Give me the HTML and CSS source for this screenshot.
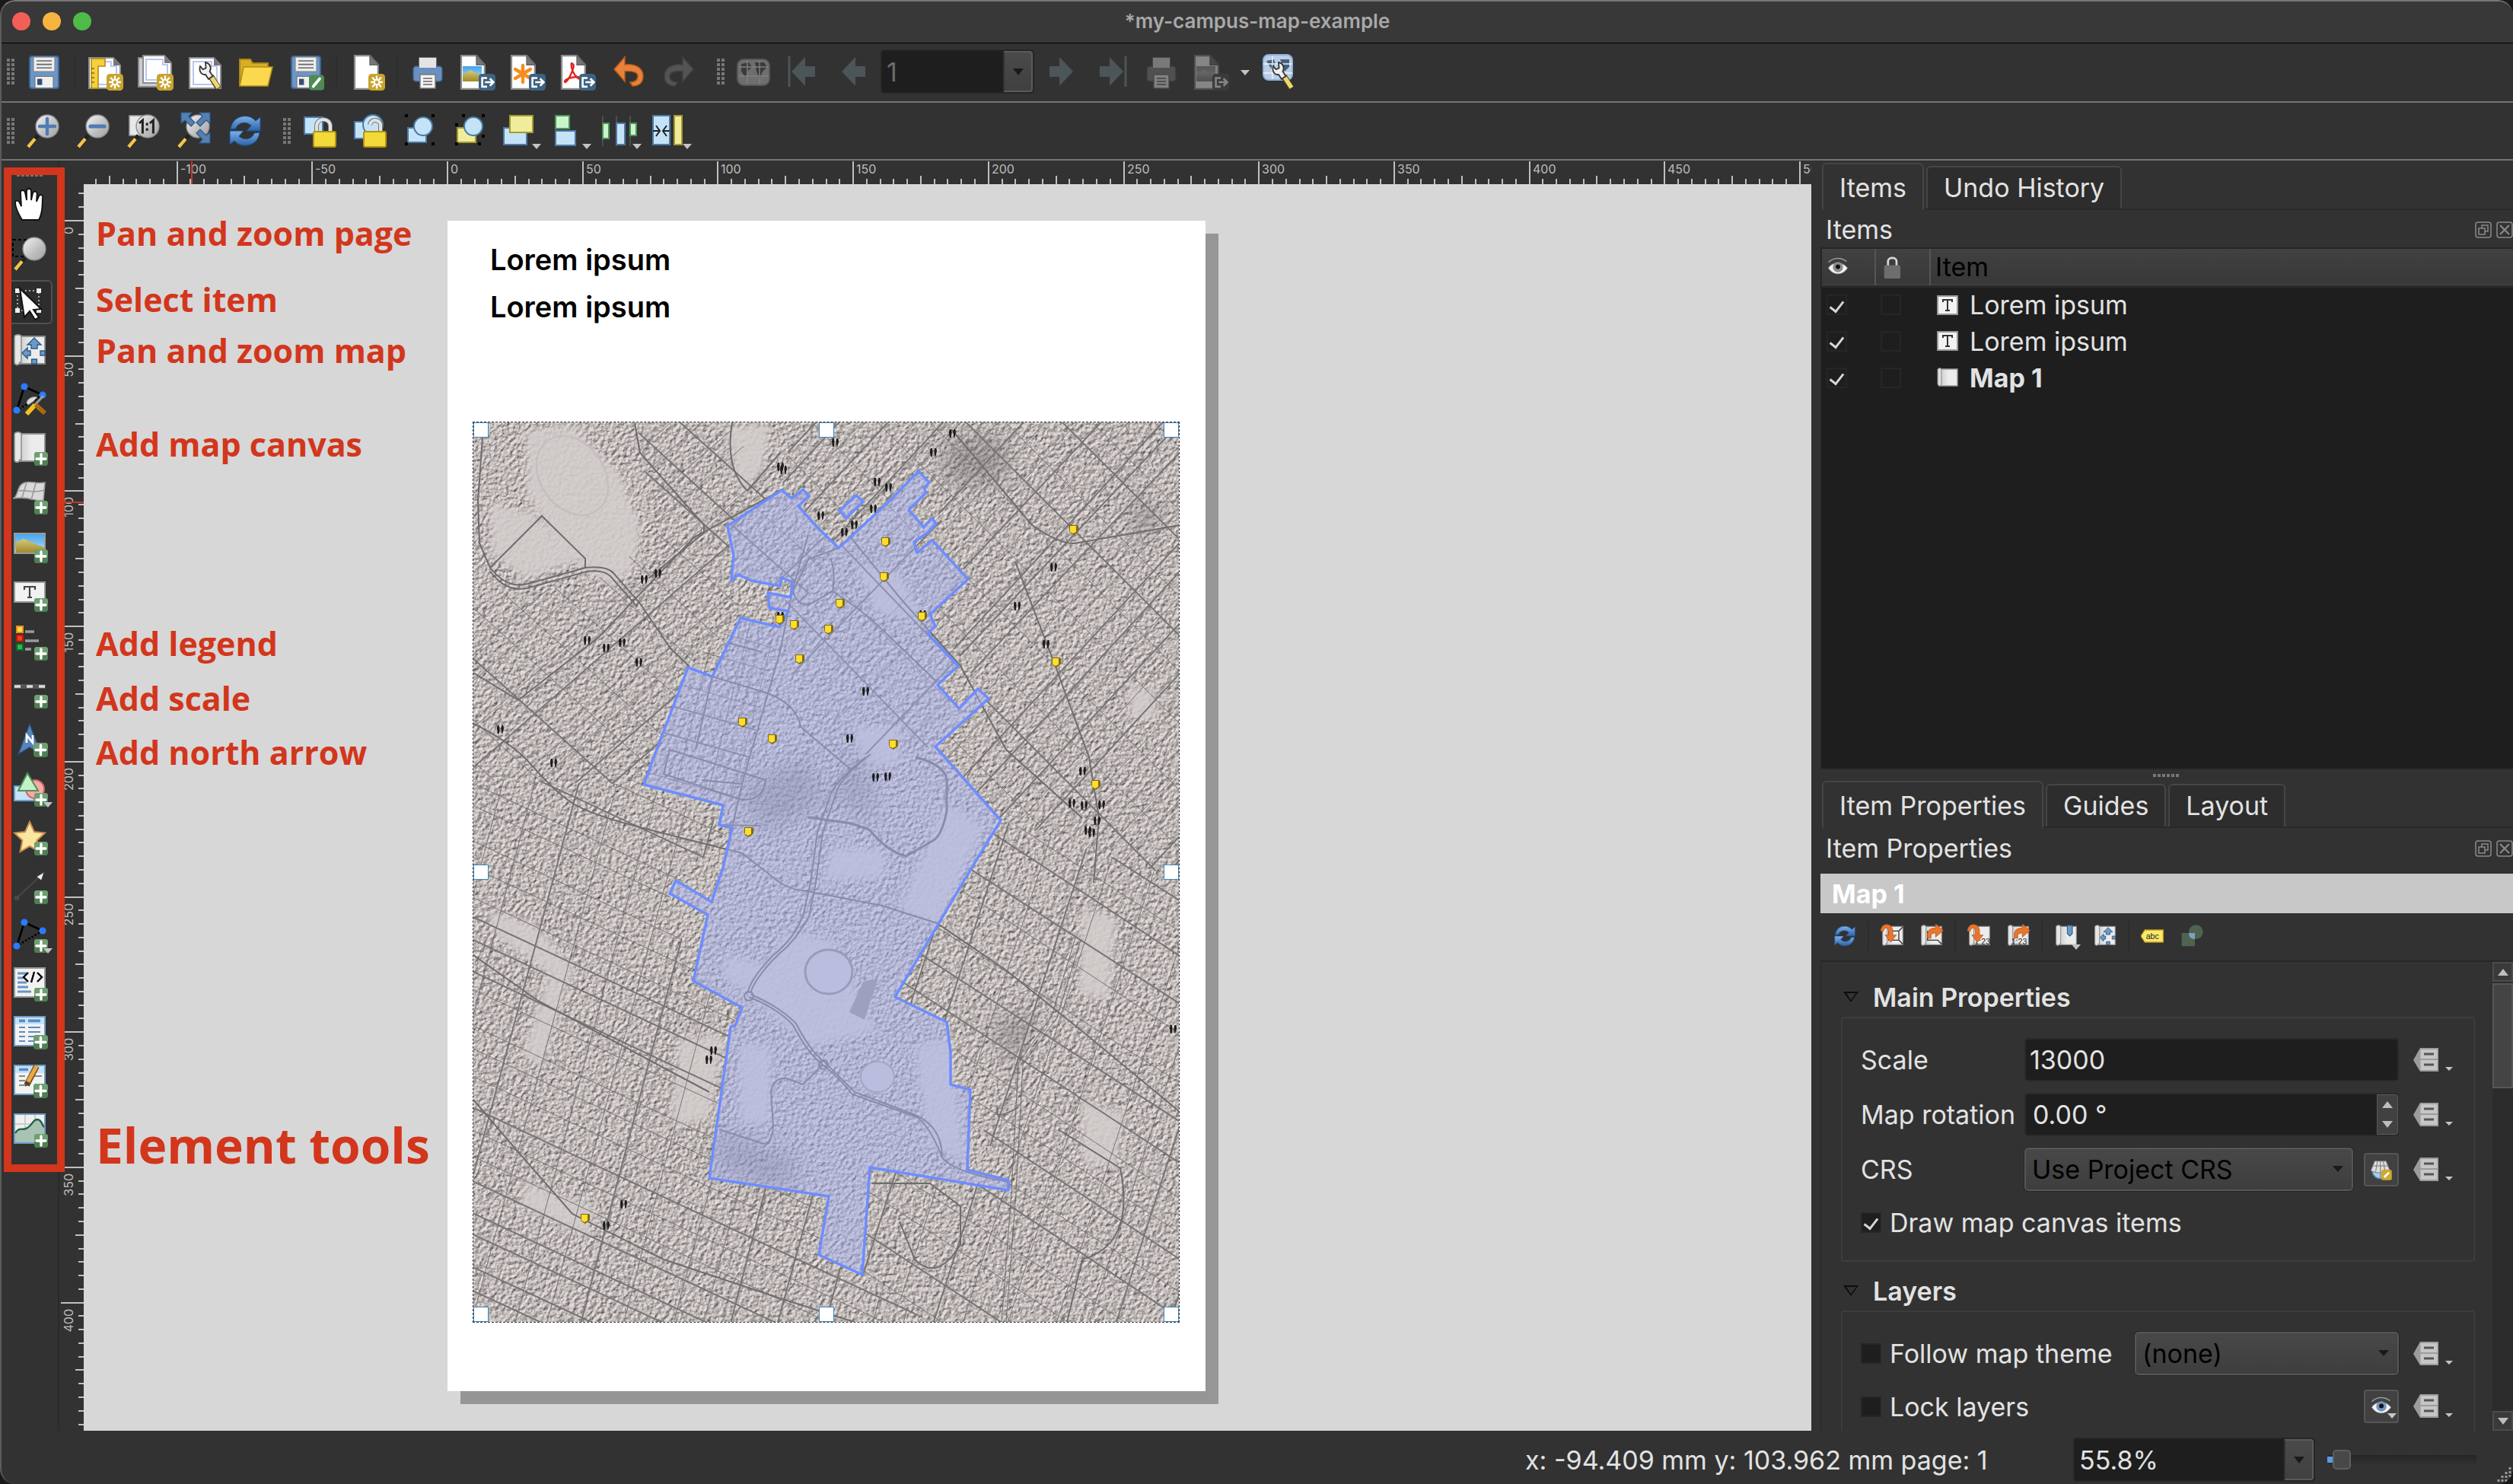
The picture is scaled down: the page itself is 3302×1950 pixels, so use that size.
FILE: index.html
```html
<!DOCTYPE html>
<html lang="en">
<head>
<meta charset="utf-8">
<title>*my-campus-map-example</title>
<link rel="stylesheet" href="styles.css">
</head>
<body>
<svg class="sprite" aria-hidden="true">
  <defs>
    <linearGradient id="gLens" x1="0" y1="0" x2="1" y2="1"><stop offset="0" stop-color="#f4f4f4"/><stop offset=".6" stop-color="#bdbdbd"/><stop offset="1" stop-color="#a2a2a2"/></linearGradient>
    <linearGradient id="gBlue" x1="0" y1="0" x2="0" y2="1"><stop offset="0" stop-color="#7fb0e6"/><stop offset="1" stop-color="#2a62ac"/></linearGradient>
    <linearGradient id="gSky" x1="0" y1="0" x2="0" y2="1"><stop offset="0" stop-color="#3fa4ee"/><stop offset="1" stop-color="#bfe0f4"/></linearGradient>
    <linearGradient id="gSand" x1="0" y1="0" x2="0" y2="1"><stop offset="0" stop-color="#d8c878"/><stop offset="1" stop-color="#a08a2c"/></linearGradient>
    <linearGradient id="gRoll" x1="0" y1="0" x2="1" y2="0"><stop offset="0" stop-color="#c8c8c8"/><stop offset=".5" stop-color="#ececec"/></linearGradient>
  </defs>
  <symbol id="b-star" viewBox="0 0 12 12"><rect width="12" height="12" rx="2.4" fill="#c8a42c"/><path d="M6 1.4v9.2M1.7 6h8.6M2.8 2.6l6.4 6.8M9.2 2.6L2.8 9.4" stroke="#fff" stroke-width="1.3"/><circle cx="6" cy="6" r="1.7" fill="#c8a42c" stroke="#fff"/></symbol>
  <symbol id="b-plus" viewBox="0 0 12 12"><rect width="12" height="12" rx="2.4" fill="#4f7f53"/><path d="M0 2.4Q0 0 2.4 0h7.2Q12 0 12 2.4V5L0 7z" fill="#6f9f72"/><path d="M6 2v8M2 6h8" stroke="#fff" stroke-width="2.2" stroke-linecap="round"/></symbol>
  <symbol id="b-out" viewBox="0 0 12 12"><rect width="12" height="12" rx="2.4" fill="#3d6382"/><path d="M6 3H2.5v6.2H6M4.5 6h5.8M8 3.4L10.6 6 8 8.6" fill="none" stroke="#fff" stroke-width="1.4"/></symbol>
  <symbol id="b-pen" viewBox="0 0 12 12"><rect width="12" height="12" rx="2.4" fill="#4f8a54"/><path d="M3.4 9L8.4 3" stroke="#fff" stroke-width="2.2" stroke-linecap="round"/></symbol>
  <symbol id="page" viewBox="0 0 24 24"><path d="M4 1.6h10l5.400 6V23.400H4z" fill="#fff" stroke="#8b8b8b" stroke-width="1.100"/><path d="M14 1.600v6h5.400z" fill="#777" stroke="#666" stroke-width=".7"/></symbol>
  <symbol id="frame" viewBox="0 0 24 24"><path d="M1.500 3h16l4.500 5v15H1.500z" fill="#fff" stroke="#8b8b8b"/><path d="M4 5.500h12v3h3.500V20.500H4z" fill="none" stroke="#b9c8ee"/><path d="M17.500 3v5H22z" fill="#777"/></symbol>
  <symbol id="save" viewBox="0 0 24 24"><rect x="2.500" y="2" width="19" height="21" rx="1.500" fill="#6c96c8" stroke="#3e6696"/><rect x="5" y="2.500" width="14" height="9.500" fill="#ededed" stroke="#888" stroke-width=".6"/><path d="M7 5h10M7 7.300h10M7 9.600h10" stroke="#666" stroke-width=".8"/><rect x="6" y="15.200" width="12" height="7.600" fill="#f0f0f0" stroke="#777" stroke-width=".6"/><rect x="7.500" y="16.800" width="3.200" height="4" fill="#344f78"/></symbol>
  <symbol id="wrench" viewBox="0 0 24 24"><path d="M15.500 15l5 8" stroke="#4c4420" stroke-width="4"/><path d="M15.500 15l5 7.600" stroke="#f0d774" stroke-width="2.800"/><path d="M8.500 8.500c-1 3 .8 6 3.500 5.500l2 3 2.800-2-2-3c1.500-2.500 0-5.500-2.800-6l.3 3.700-2 .9z" fill="#eee" stroke="#333" stroke-width=".9"/></symbol>
  <symbol id="folder" viewBox="0 0 24 24"><path d="M1.500 21V4h7l1.500 2.500h10V10" fill="#d9ae24" stroke="#a98718"/><path d="M1.500 21.500L4 9h19l-3 12.500z" fill="#fbd84e" stroke="#b08f1c" stroke-width=".8"/></symbol>
  <symbol id="printer" viewBox="0 0 24 24"><rect x="6.500" y="3" width="11" height="8" fill="#e9e9e9" stroke="#888" stroke-width=".7"/><rect x="2.500" y="8.500" width="19" height="10" rx="2" fill="#6a8fc0" stroke="#3b5f8c" stroke-width=".7"/><path d="M6.500 3h11v6.500h-11z" fill="#e4e4e4"/><rect x="7" y="14" width="10" height="9" fill="#f4f4f4" stroke="#777" stroke-width=".7"/><path d="M9 16.500h6M9 18.500h6M9 20.500h6" stroke="#666" stroke-width=".8"/></symbol>
  <symbol id="undo" viewBox="0 0 24 24"><path d="M2.500 10.500L9.500 2.500v5c8-1 12 3 12 7.500 0 4-2.500 6.500-7 6.500l-1.500-2.500c4 0 5-1.800 5-4 0-2-2-3.600-8.500-3.200V18.500z" fill="#e8823a" stroke="#b85a18" stroke-width=".8"/></symbol>
  <symbol id="globe" viewBox="0 0 24 24"><rect x="1.500" y="4" width="21" height="17" rx="4" fill="#b9cfe8" stroke="#7f9cc0"/><path d="M4 7l5-1 2 3-3 3-1 4-3-4zM13 6l6 0 2 3-3 3-2 5-2-5z" fill="#48607e"/><path d="M8 4.500v16M16 4.500v16M2 9h20M2 15h20" stroke="#eef4fa" stroke-width=".7"/></symbol>
  <symbol id="arrow-left" viewBox="0 0 24 24"><path d="M4 12L13 2.500v6h6.500v7H13v6z" fill="#4c5558"/></symbol>
  <symbol id="lens" viewBox="0 0 24 24"><path d="M2 22l6-7" stroke="#222" stroke-width="2.800"/><path d="M1.500 22.500l4.500-5.300" stroke="#f4c34c" stroke-width="2.200"/><circle cx="14" cy="9" r="7.500" fill="url(#gLens)" stroke="#8d8d8d" stroke-width=".7"/></symbol>
  <symbol id="refresh" viewBox="0 0 24 24"><path d="M2.500 11C3 5 8 1.500 14 2.500c2.500.5 4 2 5 3L22 3v9h-9l3-3.500C12 5 7 7 6 10.500z" fill="url(#gBlue)" stroke="#1f4f8f" stroke-width=".5"/><path d="M21.500 13c-.5 6-5.500 9.500-11.500 8.500-2.500-.5-4-2-5-3L2 21v-9h9l-3 3.500C12 19 17 17 18 13.500z" fill="url(#gBlue)" stroke="#1f4f8f" stroke-width=".5"/></symbol>
  <symbol id="roll" viewBox="0 0 24 24"><path d="M4 2.500h18v18H4z" fill="url(#gRoll)" stroke="#8d8d8d" stroke-width=".9"/><path d="M2 3c0-2.200 4.500-2.200 4.500 0v16.500h-1C5 22 2 21.500 2 19.500z" fill="#e6e6e6" stroke="#909090" stroke-width=".8"/></symbol>
  <symbol id="movearrows" viewBox="0 0 24 24"><path d="M15 3.500l4.500 4.500h-2.500v2.500h-4V8h-2.500zM7 13.500l3.500-3.500v2h2v3h-2v2zM22 12h-3v3h3zM13.300 20.500v-3h3.400v3z" fill="#6b9ac6" stroke="#2f5b88" stroke-width=".7"/></symbol>
  <symbol id="shape3" viewBox="0 0 24 24"><path d="M3.500 19L8.500 3.500 20.500 9" fill="none" stroke="#000" stroke-width="1.300"/><path d="M20.500 9L3.500 19" stroke="#000" stroke-width="1.300" stroke-dasharray="1.200 1.200"/><circle cx="8.500" cy="3.500" r="2.300" fill="#2a7bff"/><circle cx="20.500" cy="9" r="2.300" fill="#2a7bff"/><circle cx="3.500" cy="19" r="2.300" fill="#2a7bff"/></symbol>
  <symbol id="picture" viewBox="0 0 24 24"><rect x="2" y="4" width="20" height="13" fill="url(#gSky)" stroke="#9a9a9a"/><path d="M2.500 10l5.500-2.500 14 6V16.500h-19z" fill="url(#gSand)"/></symbol>
  <symbol id="label" viewBox="0 0 24 24"><rect x="2" y="4" width="20" height="13" fill="#f2f2f2" stroke="#999"/><path d="M8.500 9V7h7v2M12 7v7M10.500 14h3" fill="none" stroke="#444" stroke-width="1.100"/></symbol>
  <symbol id="eye" viewBox="0 0 24 24"><path d="M2 13c4-7 15-7 20 0-5 8-15 8-20 0z" fill="#f4f4f4" stroke="#999" stroke-width=".6"/><circle cx="12" cy="12" r="5.400" fill="var(--iris)"/><circle cx="12" cy="11.500" r="2.400" fill="#111"/><path d="M2 7c6-6 14-5 19-1" fill="none" stroke="#999" stroke-width="1.300"/></symbol>
  <symbol id="lockicon" viewBox="0 0 24 24"><path d="M7 11V6c0-5 9-5 9 0v5" fill="none" stroke="#d8d8d8" stroke-width="2.200"/></symbol>
  <symbol id="define" viewBox="0 0 36 34"><path d="M9 1h24v31H9L0 17z" fill="#9c9c9c"/><path d="M9.500 3h22v12h-22zM9.500 17h22v13h-22z" fill="#c6c6c6"/><path d="M14 9h13M14 23h13" stroke="#555" stroke-width="3"/></symbol>
  <symbol id="float" viewBox="0 0 22 22"><rect x="1" y="1" width="20" height="20" rx="3" fill="none" stroke="#8a8a8a" stroke-width="1.500"/><path d="M5 9h8v8H5zM9 9V5h8v8h-4" fill="none" stroke="#8a8a8a" stroke-width="1.500"/></symbol>
  <symbol id="close" viewBox="0 0 22 22"><rect x="1" y="1" width="20" height="20" rx="3" fill="none" stroke="#8a8a8a" stroke-width="1.500"/><path d="M5 5l12 12M17 5L5 17" stroke="#8a8a8a" stroke-width="2.200"/></symbol>
  <symbol id="yellow-pin" viewBox="0 0 14 14"><path d="M1 1h11l1 2v6l-2 2-4 3-5-3-1-3z" fill="#7d6a14"/><path d="M2 2h8v8l-4 2-4-2z" fill="#ffdd2e"/></symbol>
  <symbol id="people" viewBox="0 0 12 14"><path d="M2 1h2l1 4-1 8H2L1 5zM8 1h2l1 4-2 8H8L7 5z" fill="#1c1c1c"/></symbol>
  <symbol id="orange-down" viewBox="0 0 24 24"><path d="M0 7C1-1.500 11.500-1.500 12 7v4h3.500L10 18l-5.500-7H8V7C7.500 3 3.500 3 3 7z" fill="#e8762c" stroke="#b8561a" stroke-width=".6"/></symbol>
  <symbol id="orange-right" viewBox="0 0 24 24"><path d="M8 14C7 7 10 4 16 4V0l7.500 6.500L16 13V9c-4 0-5 1.500-4.500 5z" fill="#e8762c" stroke="#b8561a" stroke-width=".6"/></symbol>
</svg>

<div class="window">
  <header class="titlebar">
    <div class="lights"><span class="light red"></span><span class="light amber"></span><span class="light green"></span></div>
    <h1 class="window-title">*my-campus-map-example</h1>
  </header>

  <div class="toolbar" role="toolbar" aria-label="Layout">
    <span class="grip"></span>
    <button class="tool" aria-label="Save project"><svg viewBox="0 0 24 24"><use href="#save"/></svg></button>
    <span class="sep"></span>
    <button class="tool" aria-label="New layout"><svg viewBox="0 0 24 24"><use href="#frame"/><path d="M3 3.500h9v5H7.500V23H3z" fill="#f6cf3f" stroke="#b28d16" stroke-width=".8"/><path d="M3 10h2M3 13h2M3 16h2M3 19h2" stroke="#8a6c10" stroke-width=".8"/><use href="#b-star" x="13" y="13.500" width="11" height="11"/></svg></button>
    <button class="tool" aria-label="Duplicate layout"><svg viewBox="0 0 24 24"><path d="M1 3h17v19H1z" fill="#cfcad6" stroke="#888"/><path d="M4 1.500h14l4.500 5V19.500H4z" fill="#fff" stroke="#8b8b8b"/><path d="M6 4h11v3.500h3v10H6z" fill="none" stroke="#b9c8ee"/><path d="M18 1.500v5h4.500z" fill="#777"/><use href="#b-star" x="13" y="13.500" width="11" height="11"/></svg></button>
    <button class="tool" aria-label="Layout manager"><svg viewBox="0 0 24 24"><use href="#frame"/><use href="#wrench"/></svg></button>
    <button class="tool" aria-label="Add items from template"><svg viewBox="0 0 24 24"><use href="#folder"/></svg></button>
    <button class="tool" aria-label="Save as template"><svg viewBox="0 0 24 24"><use href="#save"/><use href="#b-pen" x="14" y="14" width="10" height="10.500"/></svg></button>
    <span class="sep"></span>
    <button class="tool" aria-label="Add pages"><svg viewBox="0 0 24 24"><use href="#page"/><use href="#b-star" x="13" y="13.500" width="11" height="11"/></svg></button>
    <span class="sep"></span>
    <button class="tool" aria-label="Print"><svg viewBox="0 0 24 24"><use href="#printer"/></svg></button>
    <button class="tool" aria-label="Export as image"><svg viewBox="0 0 24 24"><use href="#page" x="-3"/><rect x="2" y="8.500" width="12.500" height="10" fill="url(#gSky)"/><path d="M2 14l5-3 7.500 4v3.500H2z" fill="url(#gSand)"/><use href="#b-out" x="12.500" y="13.500" width="11" height="11"/></svg></button>
    <button class="tool" aria-label="Export as SVG"><svg viewBox="0 0 24 24"><use href="#page" x="-3"/><path d="M8.500 8v11M3.500 10.500l10 6M13.500 10.500l-10 6" stroke="#f68d1e" stroke-width="2.200" stroke-linecap="round"/><use href="#b-out" x="12.500" y="13.500" width="11" height="11"/></svg></button>
    <button class="tool" aria-label="Export as PDF"><svg viewBox="0 0 24 24"><use href="#page" x="-3"/><path d="M8 7c2 0 0 5-1.500 8S3 20 3 18.500 8 15.500 11 15.500s4 2 2 1.500-5-4-5.500-8S8 7 8 7z" fill="none" stroke="#e0261c" stroke-width="1.200"/><use href="#b-out" x="12.500" y="13.500" width="11" height="11"/></svg></button>
    <button class="tool" aria-label="Undo"><svg viewBox="0 0 24 24"><use href="#undo"/></svg></button>
    <button class="tool" aria-label="Redo" disabled><svg class="flip gray" viewBox="0 0 24 24"><use href="#undo"/></svg></button>
    <span class="grip wide"></span>
    <button class="tool" aria-label="Preview atlas" disabled><svg class="gray" viewBox="0 0 24 24"><use href="#globe"/></svg></button>
    <button class="tool" aria-label="First feature" disabled><svg viewBox="0 0 24 24"><use href="#arrow-left"/><path d="M2.500 2v20" stroke="#4c5558" stroke-width="1.500"/></svg></button>
    <button class="tool" aria-label="Previous feature" disabled><svg viewBox="0 0 24 24"><use href="#arrow-left"/></svg></button>
    <div class="combo atlas-page"><input type="text" value="1" aria-label="Atlas page" disabled><button class="combo-btn" aria-label="Choose page" disabled></button></div>
    <button class="tool" aria-label="Next feature" disabled><svg class="flip" viewBox="0 0 24 24"><use href="#arrow-left"/></svg></button>
    <button class="tool" aria-label="Last feature" disabled><svg class="flip" viewBox="0 0 24 24"><use href="#arrow-left"/><path d="M2.500 2v20" stroke="#4c5558" stroke-width="1.500"/></svg></button>
    <button class="tool" aria-label="Print atlas" disabled><svg class="gray" viewBox="0 0 24 24"><use href="#printer"/></svg></button>
    <button class="tool" aria-label="Export atlas" disabled><svg class="gray" viewBox="0 0 24 24"><use href="#page" x="-3"/><rect x="2" y="8.500" width="12.500" height="10" fill="url(#gSky)"/><path d="M2 14l5-3 7.500 4v3.500H2z" fill="url(#gSand)"/><use href="#b-out" x="12.500" y="13.500" width="11" height="11"/></svg></button>
    <button class="drop" aria-label="Export atlas options"></button>
    <button class="tool" aria-label="Atlas settings"><svg viewBox="0 0 24 24"><rect x="2" y="1" width="19" height="16.500" rx="3.500" fill="#b9cfe8" stroke="#8fb0d8"/><path d="M4 5l5-1 1 3-3 3zM13 4l6 0 0 5-3 3z" fill="#48607e"/><path d="M8 2v15M2 7h19M2 13h19" stroke="#eef4fa" stroke-width=".7"/><use href="#wrench"/></svg></button>
  </div>

  <div class="toolbar second" role="toolbar" aria-label="Navigation and actions">
    <span class="grip"></span>
    <button class="tool" aria-label="Zoom in"><svg viewBox="0 0 24 24"><use href="#lens"/><path d="M14 4v10M9 9h10" stroke="#4e7cb4" stroke-width="2.200" stroke-linecap="round"/></svg></button>
    <button class="tool" aria-label="Zoom out"><svg viewBox="0 0 24 24"><use href="#lens"/><path d="M9.500 9h9" stroke="#4e7cb4" stroke-width="2.600" stroke-linecap="round"/></svg></button>
    <button class="tool" aria-label="Zoom to 100%"><svg viewBox="0 0 24 24"><path d="M2 2h13v13H2z" fill="#e8e8e8" stroke="#999" stroke-width=".8"/><use href="#lens"/><path d="M9 6.500L10.700 5v8M16 6.500L17.700 5v8M13.600 7.500v.1M13.600 11v.1" fill="none" stroke="#222" stroke-width="1.500" stroke-linecap="square"/></svg></button>
    <button class="tool" aria-label="Zoom full"><svg viewBox="0 0 24 24"><use href="#lens"/><path d="M3 0h7L8 2.500l4 4L9.500 9l-4-4L3 7zM22 0h-7l2 2.500-4 4L15.500 9l4-4L22 7zM22 20h-7l2-2.500-4-4 2.500-2.500 4 4L22 13z" fill="#5480b2" stroke="#2e5684" stroke-width=".6"/></svg></button>
    <button class="tool" aria-label="Refresh view"><svg viewBox="0 0 24 24"><use href="#refresh"/></svg></button>
    <span class="grip wide"></span>
    <button class="tool" aria-label="Lock selected items"><svg viewBox="0 0 24 24"><rect x="1" y="3" width="12" height="11" fill="#c5e3f8" stroke="#4b7ba6"/><path d="M9 14V9c0-6 9-6 9 0v5" fill="none" stroke="#777" stroke-width="3"/><path d="M9 14V9c0-6 9-6 9 0v5" fill="none" stroke="#e2e2e2" stroke-width="2"/><rect x="7" y="12.500" width="14.500" height="10" rx="1" fill="#f2da3a" stroke="#b39414"/></svg></button>
    <button class="tool" aria-label="Unlock all"><svg viewBox="0 0 24 24"><rect x="1" y="6" width="10" height="11" fill="#c5e3f8" stroke="#4b7ba6"/><circle cx="13" cy="8" r="6.500" fill="#c5e3f8" stroke="#4b7ba6"/><path d="M11 8c1-5 8-3 7 1v4" fill="none" stroke="#777" stroke-width="3"/><path d="M11 8c1-5 8-3 7 1v4" fill="none" stroke="#e2e2e2" stroke-width="2"/><rect x="7" y="12.500" width="14.500" height="10" rx="1" fill="#f2da3a" stroke="#b39414"/></svg></button>
    <button class="tool" aria-label="Group"><svg viewBox="0 0 24 24"><rect x="3" y="10" width="12" height="9.500" fill="#c5e3f8" stroke="#4b7ba6"/><circle cx="13" cy="9" r="6" fill="#c5e3f8" stroke="#4b7ba6"/><path d="M1 1h2v2H1zM18.500 1h2v2h-2zM1 19.500h2v2H1zM18.500 19.500h2v2h-2z"/></svg></button>
    <button class="tool" aria-label="Ungroup"><svg viewBox="0 0 24 24"><rect x="2.500" y="10" width="12" height="9.500" fill="#f0ec9c" stroke="#a59b2c"/><circle cx="13" cy="9" r="6" fill="#c5e3f8" stroke="#4b7ba6"/><path d="M5.500 1h2v2h-2zM18.500 1h2v2h-2zM1 7h2v2H1zM1 19.500h2v2H1zM16 19.500h2v2h-2zM18.500 14.500h2v2h-2z"/></svg></button>
    <button class="tool has-menu" aria-label="Raise items"><svg viewBox="0 0 24 24"><rect x="0" y="10" width="15" height="11" fill="#c5e3f8" stroke="#4b7ba6"/><rect x="4" y="2" width="15" height="11" fill="#f0ec9c" stroke="#a59b2c"/></svg></button>
    <button class="tool has-menu" aria-label="Align items"><svg viewBox="0 0 24 24"><rect x="1" y="2" width="9" height="8.500" fill="#c8f5cc" stroke="#4f9258"/><rect x="1" y="12" width="13" height="9.500" fill="#c5e3f8" stroke="#4b7ba6"/></svg></button>
    <button class="tool has-menu" aria-label="Distribute items"><svg viewBox="0 0 24 24"><path d="M-1 2v20M8 2v20M17 2v20" stroke="#555" stroke-width=".8"/><rect x="-1" y="7" width="4" height="10" fill="#c8f5cc" stroke="#4f9258"/><rect x="8" y="7" width="5.500" height="14" fill="#c5e3f8" stroke="#4b7ba6"/><rect x="17" y="7" width="4" height="8" fill="#c8f5cc" stroke="#4f9258"/></svg></button>
    <button class="tool has-menu" aria-label="Resize items"><svg viewBox="0 0 24 24"><rect x="-1" y="2" width="11" height="19" fill="#c5e3f8" stroke="#4b7ba6"/><path d="M-1 12h4M1 8.500L3.500 12 1 15.500M10 12H6M8 8.500L5.500 12 8 15.500" fill="none" stroke="#222" stroke-width="1"/><rect x="13" y="2" width="5" height="19" fill="#f0ec9c" stroke="#a59b2c"/></svg></button>
  </div>

  <div class="workspace">
    <nav class="rail" role="toolbar" aria-label="Toolbox">
      <span class="rail-grip"></span>
      <button class="tool" aria-label="Pan layout"><svg viewBox="0 0 24 24"><path d="M7 22C4 17 2.500 14 2.500 10.500 3 8.500 5 9 6 12L6.500 13 6 4c0-2 2.500-2 3 0l1 5V3c0-2 3-2 3 0v6l1-4.500c.5-1.800 3-1.500 2.800.5L16.500 10l1.500-3.500c.7-1.500 3-1 2.500 1-.5 5 .5 9-2.500 14.500z" fill="#fff" stroke="#111" stroke-width=".9"/></svg></button>
      <button class="tool" aria-label="Zoom"><svg viewBox="0 0 24 24"><path d="M1 3h12v11H1z" fill="none" stroke="#000" stroke-dasharray="2 1.500"/><use href="#lens" x="1" y="0"/></svg></button>
      <button class="tool active" aria-label="Select/Move item" aria-pressed="true"><svg viewBox="0 0 24 24"><path d="M4 4.500h14v13H4z" fill="none" stroke="#aaa" stroke-dasharray="1 1.500"/><path d="M2.500 3h3v3h-3zM16.500 3h3v3h-3zM2.500 16h3v3h-3zM16.500 16h3v3h-3z" fill="#eee"/><path d="M5.500 3l14 13.500-5 .5 3.500 5-2.500 1.500-3.500-5.500-3.500 4z" fill="#fff" stroke="#111"/></svg></button>
      <button class="tool" aria-label="Move item content"><svg viewBox="0 0 24 24"><use href="#roll"/><use href="#movearrows"/></svg></button>
      <button class="tool" aria-label="Edit nodes item"><svg viewBox="0 0 24 24"><use href="#shape3"/><path d="M10 21.500L21 9.500" stroke="#999" stroke-width="1.600"/><path d="M10 21.500l5.500-6" stroke="#f2c21c" stroke-width="3"/><path d="M16 15.500l6 5.500" stroke="#a96a12" stroke-width="3"/><path d="M10 14.500c0-3 4-5 7-4l-3 3-3 2z" fill="#ddd" stroke="#888" stroke-width=".5"/></svg></button>
      <button class="tool" aria-label="Add map"><svg viewBox="0 0 24 24"><use href="#roll"/><use href="#b-plus" x="15" y="14.500" width="9" height="9"/></svg></button>
      <button class="tool" aria-label="Add 3D map"><svg viewBox="0 0 24 24"><path d="M1 13C5 12 3 4 9 2.500c4-1 8 1 13 0L21 14c-4 2-9-3-20-1z" fill="#d9d9d9" stroke="#999" stroke-width=".8"/><path d="M5 8c5-1 9 2 16.500-.5M10 2.500L7 12.500M16 3l-3 11" fill="none" stroke="#999" stroke-width=".8"/><use href="#b-plus" x="15" y="14.500" width="9" height="9"/></svg></button>
      <button class="tool" aria-label="Add picture"><svg viewBox="0 0 24 24"><use href="#picture"/><use href="#b-plus" x="15" y="14.500" width="9" height="9"/></svg></button>
      <button class="tool" aria-label="Add label"><svg viewBox="0 0 24 24"><use href="#label"/><use href="#b-plus" x="15" y="14.500" width="9" height="9"/></svg></button>
      <button class="tool" aria-label="Add legend"><svg viewBox="0 0 24 24"><rect x="3.500" y="1" width="4" height="4" fill="#ffe14a" stroke="#f08a1c"/><rect x="3.500" y="6.800" width="4" height="4" fill="#ff3b20" stroke="#b31c0c"/><rect x="3.500" y="12.600" width="4" height="4" fill="#35b558" stroke="#0c6a28"/><path d="M9 4.500h6M9 10.500h9M9 16h4" stroke="#9a9a9a" stroke-width="1.800"/><use href="#b-plus" x="15" y="14.500" width="9" height="9"/></svg></button>
      <button class="tool" aria-label="Add scale bar"><svg viewBox="0 0 24 24"><path d="M1.500 8.500h21" stroke="#555" stroke-width="3"/><path d="M2 8.500h20" stroke="#ddd" stroke-width="1.800" stroke-dasharray="4 4"/><use href="#b-plus" x="15" y="14" width="9" height="9"/></svg></button>
      <button class="tool" aria-label="Add north arrow"><svg viewBox="0 0 24 24"><path d="M12 1l7.500 20L12 16.500 4.500 21z" fill="#5683b8" stroke="#2a4a72" stroke-width=".7"/><path d="M10 13.500v-5l4 5v-5" fill="none" stroke="#fff" stroke-width="1.300"/><use href="#b-plus" x="14.500" y="13.500" width="9.500" height="9.500"/></svg></button>
      <button class="tool has-menu" aria-label="Add shape"><svg viewBox="0 0 24 24"><rect x="2" y="10" width="13" height="9.500" fill="#c5e3f8" stroke="#6f9ec6"/><circle cx="15.500" cy="12" r="6" fill="#f7a9a9" stroke="#d06464"/><path d="M10.500 1.500l7 11.500h-13z" fill="#c2f3c6" stroke="#4f9258"/><use href="#b-plus" x="15" y="14.500" width="9" height="9"/></svg></button>
      <button class="tool" aria-label="Add marker"><svg viewBox="0 0 24 24"><path d="M12 1.500l3 6.500 7 .8-5.200 4.800L18.200 21 12 17.500 5.800 21l1.400-7.400L2 8.800 9 8z" fill="#fbe6a0" stroke="#c98d4c"/><use href="#b-plus" x="15" y="14.500" width="9" height="9"/></svg></button>
      <button class="tool" aria-label="Add arrow"><svg viewBox="0 0 24 24"><path d="M3.500 19.500L18 6" stroke="#484848" stroke-width="1"/><path d="M2 18h3v3H2z" fill="#484848"/><path d="M16.500 5.500l5-3-1.800 5.500z" fill="#eee" stroke="#444" stroke-width=".5"/><use href="#b-plus" x="15" y="14.500" width="9" height="9"/></svg></button>
      <button class="tool has-menu" aria-label="Add node item"><svg viewBox="0 0 24 24"><use href="#shape3"/><use href="#b-plus" x="15" y="14.500" width="9" height="9"/></svg></button>
      <button class="tool" aria-label="Add HTML"><svg viewBox="0 0 24 24"><rect x="2" y="1.500" width="20" height="19" fill="#f2f2f2" stroke="#999"/><path d="M4 5h6M4 8h4M4 11h6M4 14h7M4 17h9" stroke="#6a94c8" stroke-width="1.500"/><path d="M11 4.500L8 7.500l3 3M17 4.500l3 3-3 3M15 4l-2 7" fill="none" stroke="#000" stroke-width="1.200"/><use href="#b-plus" x="15" y="14.500" width="9" height="9"/></svg></button>
      <button class="tool" aria-label="Add attribute table"><svg viewBox="0 0 24 24"><rect x="2" y="1.500" width="20" height="19" fill="#f2f2f2" stroke="#6f9ec6"/><path d="M2.500 2h19v4.500h-19z" fill="#c5e3f8"/><path d="M5 4.200h4M11 4.200h8" stroke="#5c8cc4" stroke-width="1.800"/><path d="M5 8.500h4M11 8.500h8M5 11.500h4M11 11.500h8M5 14.500h4M11 14.500h8M5 17.500h4M11 17.500h5" stroke="#5c8cc4"/><use href="#b-plus" x="14.500" y="13.500" width="9.500" height="9.500"/></svg></button>
      <button class="tool" aria-label="Add fixed table"><svg viewBox="0 0 24 24"><rect x="2" y="1.500" width="20" height="19" fill="#f2f2f2" stroke="#6f9ec6"/><path d="M2.500 2h19v4.500h-19z" fill="#c5e3f8"/><path d="M5 4.200h6" stroke="#5c8cc4" stroke-width="1.800"/><path d="M5 8.500h4M5 11.500h4M5 14.500h4M15 8.500h5" stroke="#888"/><path d="M10 14.500L16.500 2" stroke="#7a4a12" stroke-width="4"/><path d="M10.500 13L16.500 2" stroke="#eaa84a" stroke-width="2.600"/><path d="M9 15.500l.5-4 3 1.800z" fill="#444"/><use href="#b-plus" x="14.500" y="13.500" width="9.500" height="9.500"/></svg></button>
      <button class="tool" aria-label="Add elevation profile"><svg viewBox="0 0 24 24"><rect x="2" y="1.500" width="20" height="19" fill="#eef0f0" stroke="#6f9ec6"/><path d="M9 2v18M15.500 2v18M2.500 8h19M2.500 14h19" stroke="#ccc"/><path d="M2.500 14c3-5 5-1 8-3.500C14 8.500 14 5 17 5c3 0 3 4 4.500 5v10h-19z" fill="#a8c2b4"/><path d="M2.500 14c3-5 5-1 8-3.500C14 8.500 14 5 17 5c3 0 3 4 4.500 5" fill="none" stroke="#22614a" stroke-width="1.200"/><use href="#b-plus" x="15" y="14.500" width="9" height="9"/></svg></button>
      <span class="rail-outline"></span>
    </nav>

    <main class="view">
      <span class="ruler-corner"></span>
      <svg class="ruler-x" id="ruler-x"></svg>
      <svg class="ruler-y" id="ruler-y"></svg>
      <div class="canvas">
        <section class="sheet">
          <p class="sheet-label l1">Lorem ipsum</p>
          <p class="sheet-label l2">Lorem ipsum</p>
          <div class="map">
            <svg id="map" viewBox="0 0 927 1182" role="img" aria-label="Campus map">
              <defs>
                <filter id="relief" x="0" y="0" width="100%" height="100%" color-interpolation-filters="sRGB">
                  <feTurbulence type="fractalNoise" baseFrequency="0.2" numOctaves="3" seed="7"/>
                  <feColorMatrix values="0 0 0 0 0  0 0 0 0 0  0 0 0 0 0  1 0 0 0 0"/>
                  <feDiffuseLighting surfaceScale="1.9" diffuseConstant="1.09" lighting-color="#d9d2d0"><feDistantLight azimuth="225" elevation="56"/></feDiffuseLighting>
                </filter>
                <filter id="soft"><feGaussianBlur stdDeviation="5"/></filter>
                <filter id="shade"><feGaussianBlur stdDeviation="14"/></filter>
              </defs>
              <rect width="927" height="1182" fill="#cdc8c6"/>
              <rect width="927" height="1182" filter="url(#relief)"/>
              <g id="blocks" fill="none"></g>
              <g fill="#d3cdcc" filter="url(#soft)" opacity=".88">
                <path d="M70 10l60-5 60 60 30 70-10 60-30 20-60-40-50-80z"/><path d="M20 105l60 15 50 65-60 20-45-30zM330 5l60 0-10 60-30 30zM20 640l60 20 55 60-30 10-80-60zM100 720l30 0-40 130-25-20z"/>
                <path d="M500 400h60v50h-50zM620 500l50 30-60 130-50-20zM470 560h70v40h-80zM410 670l60 10 60 120-90 20-80-70z"/>
                <path d="M800 640l45 10-10 110-40-10zM800 890l55 20-10 70-45-10zM860 350h35v40h-30zM270 810l60-5-20 110-50 10z"/>
                <path d="M580 820l45-10 20 160-45-20zM330 700l50 10 10 60-60-40zM350 820h40v100h-40zM70 1000l90 30-10 40-90-40zM500 180l60 20 30 60-60-10z"/>
              </g>
              <g fill="#6e6a6c" filter="url(#shade)" opacity=".42">
                <path d="M620 20h80v60h-80zM350 480l90-40 20 60-80 40zM680 790l60-20-30 80zM320 930l110 40-20 40-90-30zM470 490l40-60 20 100zM860 100l40 10-20 60z"/>
              </g>
              <ellipse cx="467" cy="722" rx="31" ry="29" fill="#cfc9ca" stroke="#8e898d" stroke-width="3"/>
              <path d="M512 735l20-5-18 55-20-10z" fill="#979294"/><ellipse cx="531" cy="860" rx="22" ry="20" fill="#cfc9ca" stroke="#a39ea0" stroke-width="2"/>
              <ellipse cx="130" cy="70" rx="42" ry="56" transform="rotate(-35 130 70)" fill="none" stroke="#c3bdbc" stroke-width="2"/>
              <g id="streets" fill="none" stroke="#777574"></g>
              <g fill="none" stroke="#6f6d6c" stroke-width="2">
                <path d="M12 20L6 104 8 159 22 191Q45 220 72 212L147 191Q175 188 184 198L219 238 259 297 284 321"/>
                <path d="M22 196Q45 226 74 217L149 196Q170 193 180 202L215 242"/>
                <path d="M212 1L219 40 303 135 303 145 230 205M59 365L165 282 290 151 403 90M0 329L59 365M22 191L90 123 147 179 147 191"/>
                <path d="M0 396Q50 420 78 452T128 499 215 531 353 566L403 605Q420 615 433 615L537 635 609 658 700 720 800 800 927 905"/>
                <path d="M522 436Q485 465 478 483L459 539 450 605 441 649Q425 680 400 700 370 730 364 750M515 440Q478 470 470 487L452 539 443 605 433 649Q420 680 394 700 365 730 360 750"/>
                <path d="M362 755Q400 770 420 792 440 830 459 844T498 883L583 913Q600 925 616 966 630 985 703 998M365 752Q403 768 424 790 443 827 462 841L501 880 570 906Q616 920 616 966"/>
                <path d="M459 844L433 870 412 862Q395 860 391 879L394 925Q392 948 381 948L323 929"/>
                <circle cx="362" cy="754" r="6"/><circle cx="460" cy="844" r="6"/>
                <path d="M791 677L760 780 716 842 707 1012 694 1182M798 680L767 782 722 844 713 1012 700 1182" stroke-width="1"/>
                <path d="M581 440Q620 450 622 470V511Q615 545 603 550L569 570Q545 565 520 535L497 527 440 519" stroke-width="3"/>
                <path d="M314 334L384 355Q425 370 430 400L497 457M440 147L419 222 403 301 353 475 340 533M494 149L560 230 640 320 700 430 800 520M472 222Q500 240 522 258L559 293 609 341M470 180Q476 200 472 222L440 240Q425 240 420 222L440 180 480 165"/>
                <path d="M712 183L765 321 809 440 822 519 815 605M628 9L734 135Q770 160 790 159L928 135M300 470L353 475M258 430L384 470Q380 500 350 495L250 462zM336 290L380 302M292 430L314 334M323 529L377 530"/>
                <path d="M0 890L60 960 130 1040 250 1100 400 1150 500 1182M0 700L85 760 310 880M716 900Q680 920 690 900M524 1000H600L640 1030V1080Q610 1130 580 1100L560 1050M770 930L850 980Q870 1080 800 1100L780 1182M340 0Q330 60 360 90L403 40"/>
              </g>
              <g fill="#a5b0f4" fill-opacity=".47" stroke="#6d8dff" stroke-width="3.500" stroke-linejoin="round">
                <path d="M405 89L419 100 433 88 441 97 427 110 451 137 480 165 544 106 585 64 599 79 592 86 595 92 572 115 592 138 602 126 608 133 597 145 579 157 583 171 603 155 650 206 600 252 607 268 597 277 637 320 610 345 638 376 663 350 677 363 607 426 693 523 655 585 554 755 622 788 627 828V870L653 877 649 982 703 996V1009L521 979 511 1120 454 1094 467 1017 310 993 338 794 344 793 353 769 289 734 308 647 258 619 266 602 313 630 328 585 340 533 323 529 328 503 224 476 234 448 282 322 314 334 351 257 402 269 414 248 389 244 387 224 417 230 419 210 405 204 403 215 365 208 348 200 339 208 342 175 334 136z"/>
                <path d="M503 96L512 104 490 126 481 116z"/>
              </g>
              <g id="pins"></g>
            </svg>
            <span class="handle tl"></span><span class="handle tc"></span><span class="handle tr"></span>
            <span class="handle ml"></span><span class="handle mr"></span>
            <span class="handle bl"></span><span class="handle bc"></span><span class="handle br"></span>
          </div>
        </section>
        <p class="note n1">Pan and zoom page</p>
        <p class="note n2">Select item</p>
        <p class="note n3">Pan and zoom map</p>
        <p class="note n4">Add map canvas</p>
        <p class="note n5">Add legend</p>
        <p class="note n6">Add scale</p>
        <p class="note n7">Add north arrow</p>
        <p class="note big">Element tools</p>
      </div>
    </main>

    <aside class="dock">
      <section class="panel items-panel">
        <div class="tabs" role="tablist">
          <button class="tab selected" role="tab" aria-selected="true">Items</button>
          <button class="tab" role="tab" aria-selected="false">Undo History</button>
        </div>
        <div class="panel-head"><h2>Items</h2><button class="mini" aria-label="Float panel"><svg viewBox="0 0 22 22"><use href="#float"/></svg></button><button class="mini" aria-label="Close panel"><svg viewBox="0 0 22 22"><use href="#close"/></svg></button></div>
        <div class="tree">
          <table>
            <thead><tr>
              <th class="c-check" aria-label="Visible"><svg class="hicon eye-gray" viewBox="0 0 24 24"><use href="#eye"/></svg></th>
              <th class="c-lock" aria-label="Locked"><svg class="hicon" viewBox="0 0 24 24"><use href="#lockicon"/><rect x="3" y="10" width="17" height="14" rx="1.500" fill="#6d6d6d"/></svg></th>
              <th class="c-name">Item</th>
            </tr></thead>
            <tbody>
              <tr><td class="c-check"><input type="checkbox" checked aria-label="Show Lorem ipsum"></td><td class="c-lock"><input type="checkbox" aria-label="Lock Lorem ipsum"></td><td><span class="item"><svg viewBox="0 0 28 26"><rect x="1" y="1" width="26" height="24" fill="#f2f2f2" stroke="#999" stroke-width="2"/><path d="M8 9V6h12v3M14 6v13M11 20h6" fill="none" stroke="#333" stroke-width="2"/></svg>Lorem ipsum</span></td></tr>
              <tr><td class="c-check"><input type="checkbox" checked aria-label="Show Lorem ipsum"></td><td class="c-lock"><input type="checkbox" aria-label="Lock Lorem ipsum"></td><td><span class="item"><svg viewBox="0 0 28 26"><rect x="1" y="1" width="26" height="24" fill="#f2f2f2" stroke="#999" stroke-width="2"/><path d="M8 9V6h12v3M14 6v13M11 20h6" fill="none" stroke="#333" stroke-width="2"/></svg>Lorem ipsum</span></td></tr>
              <tr><td class="c-check"><input type="checkbox" checked aria-label="Show Map 1"></td><td class="c-lock"><input type="checkbox" aria-label="Lock Map 1"></td><td><span class="item current"><svg viewBox="0 0 28 26"><path d="M3 2h24v22H3z" fill="url(#gRoll)" stroke="#999" stroke-width="1.500"/><path d="M1 2q3-3 5 0v20q-3 4-5 0z" fill="#ddd" stroke="#888"/></svg>Map 1</span></td></tr>
            </tbody>
          </table>
        </div>
      </section>
      <div class="splitter"><span class="dots"></span></div>
      <section class="panel props-panel">
        <div class="tabs" role="tablist">
          <button class="tab selected" role="tab" aria-selected="true">Item Properties</button>
          <button class="tab" role="tab" aria-selected="false">Guides</button>
          <button class="tab" role="tab" aria-selected="false">Layout</button>
        </div>
        <div class="panel-head tall"><h2>Item Properties</h2><button class="mini" aria-label="Float panel"><svg viewBox="0 0 22 22"><use href="#float"/></svg></button><button class="mini" aria-label="Close panel"><svg viewBox="0 0 22 22"><use href="#close"/></svg></button></div>
        <h3 class="item-title">Map 1</h3>
        <div class="map-tools" role="toolbar" aria-label="Map item">
          <button class="small" aria-label="Update map preview"><svg viewBox="0 0 24 24"><use href="#refresh"/></svg></button>
          <span class="sep"></span>
          <button class="small" aria-label="Set map extent to match main canvas"><svg viewBox="0 0 24 24"><use href="#roll"/><path d="M8 7h10v9H8zM18 7l4-4M18 16l4 4" fill="none" stroke="#333"/><use href="#orange-down"/></svg></button>
          <button class="small" aria-label="View current map extent in main canvas"><svg viewBox="0 0 24 24"><use href="#roll"/><path d="M8 7v9h10M18 16l4 4" fill="none" stroke="#333"/><use href="#orange-right"/></svg></button>
          <span class="sep"></span>
          <button class="small" aria-label="Set map scale to match main canvas"><svg viewBox="0 0 24 24"><use href="#roll"/><text x="7" y="20" class="tiny">1:23</text><use href="#orange-down"/></svg></button>
          <button class="small" aria-label="Set main canvas to match map scale"><svg viewBox="0 0 24 24"><use href="#roll"/><text x="5" y="20" class="tiny">1:23</text><use href="#orange-right"/></svg></button>
          <span class="sep"></span>
          <button class="small has-menu" aria-label="Bookmarks"><svg viewBox="0 0 24 24"><use href="#roll"/><path d="M13 1.500h5v8L15.500 12 13 9.500z" fill="#6b9ac6" stroke="#2f5b88" stroke-width=".8"/></svg></button>
          <button class="small" aria-label="Interactively edit map extent"><svg viewBox="0 0 24 24"><use href="#roll"/><use href="#movearrows"/></svg></button>
          <span class="sep"></span>
          <button class="small" aria-label="Labeling settings"><svg viewBox="0 0 24 24"><path d="M4 6h18v12H4l-4-6z" fill="#fbe96a" stroke="#c09c1c"/><text x="5" y="15" class="tiny">abc</text></svg></button>
          <button class="small" aria-label="Clipping settings" disabled><svg viewBox="0 0 24 24"><circle cx="16" cy="8" r="7" fill="#4e6350"/><path d="M2 9h13v13H2z" fill="#4e6350"/><path d="M9 9h6v6c-4 0-6-2-6-6z" fill="#7ba0c4"/></svg></button>
        </div>
        <div class="scroll">
          <form class="props">
            <h4><span class="fold"></span>Main Properties</h4>
            <fieldset>
              <div class="row"><label class="name" for="scale">Scale</label><input class="field" id="scale" type="text" value="13000"><button type="button" class="define" aria-label="Data defined scale"><svg viewBox="0 0 36 34"><use href="#define"/></svg></button></div>
              <div class="row"><label class="name" for="rot">Map rotation</label><span class="spin"><input class="field" id="rot" type="text" value="0.00 °"><span class="steps"><button type="button" class="up" aria-label="Increase"></button><button type="button" class="down" aria-label="Decrease"></button></span></span><button type="button" class="define" aria-label="Data defined rotation"><svg viewBox="0 0 36 34"><use href="#define"/></svg></button></div>
              <div class="row"><label class="name" for="crs">CRS</label><span class="pick"><select id="crs"><option>Use Project CRS</option></select></span><button type="button" class="sq" aria-label="Select CRS"><svg viewBox="0 0 24 24"><circle cx="11" cy="13" r="8.500" fill="#9fd0f0" stroke="#5b87a8"/><path d="M5 3h12l4 10c-5 3-15 3-20 0z" fill="#ddd" stroke="#777" stroke-width=".8"/><path d="M8 3L6 14M14 3l2 11M3.500 8h15M11 3v18" stroke="#777" stroke-width=".8"/><rect x="12" y="12" width="11" height="11" rx="2" fill="#d0a82c"/><path d="M15 20l5-5" stroke="#fff" stroke-width="2.200"/></svg></button><button type="button" class="define" aria-label="Data defined CRS"><svg viewBox="0 0 36 34"><use href="#define"/></svg></button></div>
              <div class="row short"><label class="tick"><input type="checkbox" checked>Draw map canvas items</label></div>
            </fieldset>
            <h4><span class="fold"></span>Layers</h4>
            <fieldset>
              <div class="row"><label class="tick theme"><input type="checkbox">Follow map theme</label><span class="pick"><select aria-label="Map theme"><option>(none)</option></select></span><button type="button" class="define" aria-label="Data defined theme"><svg viewBox="0 0 36 34"><use href="#define"/></svg></button></div>
              <div class="row short"><label class="tick grow"><input type="checkbox">Lock layers</label><button type="button" class="sq has-menu" aria-label="Set layers from theme"><svg class="eye-blue" viewBox="0 0 24 24"><use href="#eye"/></svg></button><button type="button" class="define" aria-label="Data defined layers"><svg viewBox="0 0 36 34"><use href="#define"/></svg></button></div>
            </fieldset>
          </form>
          <div class="scrollbar"><button class="sb up" aria-label="Scroll up"></button><span class="thumb"></span><button class="sb down" aria-label="Scroll down"></button></div>
        </div>
      </section>
    </aside>
  </div>

  <footer class="status">
    <span class="coords">x: -94.409 mm y: 103.962 mm page: 1</span>
    <div class="combo zoom"><input type="text" value="55.8%" aria-label="Zoom level"><button class="combo-btn" aria-label="Choose zoom"></button></div>
    <input class="slider" type="range" min="0" max="100" value="4" aria-label="Zoom">
    <svg class="resize" viewBox="0 0 24 24"><path d="M22 2v20M17 8v14M12 13v9M7 18v4" stroke="#999" stroke-width="3" stroke-dasharray="3 2"/></svg>
  </footer>
</div>
<script src="script.js"></script>
</body>
</html>
```
FILE: styles.css
```css
* { box-sizing: border-box; }
:root {
  --bg: #323232;
  --dark: #1e1e1e;
  --edge: #262626;
  --text: #e2e2e2;
  --red: #d2361c;
}
body { margin: 0; background: #191919; font-family: Inter, "Liberation Sans", sans-serif; font-size: 34px; color: var(--text); }
h1, h2, h3, h4, p { margin: 0; font-weight: 400; font-size: inherit; }
button, input, select { font: inherit; color: inherit; margin: 0; }
button { background: none; border: 0; padding: 0; }
.sprite { position: absolute; width: 0; height: 0; }
.window { display: flex; flex-direction: column; height: 100vh; background: var(--bg); border-radius: 20px; border-top: 2px solid #777; border-left: 2px solid #5c5c5c; overflow: hidden; }

.titlebar { display: grid; grid-template-columns: 1fr auto 1fr; align-items: center; height: 55px; padding-bottom: 3px; background: #383838; border-bottom: 1px solid #000; flex: none; }
.lights { display: flex; gap: 16px; padding-left: 14px; }
.light { width: 24px; height: 24px; border-radius: 50%; }
.red { background: #f35f57; }
.amber { background: #f8b440; }
.green { background: #4dbb48; }
.window-title { font-size: 26px; font-weight: 600; color: #a8a8a8; }

.toolbar { display: flex; align-items: center; height: 78px; padding: 0 0 2px 7px; flex: none; border-bottom: 2px solid #747474; }
.toolbar.second { height: 76px; padding-bottom: 0; }
.tool { display: flex; align-items: center; justify-content: center; width: 66px; height: 64px; position: relative; flex: none; }
.tool svg { width: 48px; height: 48px; overflow: visible; }
.grip { width: 10px; height: 34px; margin-right: 6px; background: repeating-linear-gradient(#777 0 4px, transparent 4px 6px); -webkit-mask: linear-gradient(90deg, #000 4px, transparent 4px 6px, #000 6px); flex: none; }
.grip.wide { margin: 0 5px 0 17px; }
.second .grip.wide { margin-right: 7px; }
.sep { width: 2px; height: 40px; margin: 0 6px; background: #2c2c2c; flex: none; }
.flip { transform: scaleX(-1); }
.gray { filter: grayscale(1) brightness(.7); opacity: .65; }
.has-menu { position: relative; }
.has-menu::after, .drop::after { content: ""; position: absolute; right: 8px; bottom: 8px; border: 6px solid transparent; border-top: 7px solid #c4c4c4; border-bottom: 0; }
.drop { width: 22px; height: 64px; position: relative; }
.drop::after { right: 5px; bottom: 27px; }
.combo { display: flex; background: var(--dark); border: 2px solid var(--edge); border-radius: 5px; }
.combo input { flex: 1; min-width: 0; background: none; border: 0; padding: 0 6px; outline: 0; }
.combo-btn { width: 39px; background: linear-gradient(#4a4a4a, #404040); border: 2px solid #5a5a5a; border-left-color: #333; border-radius: 0 4px 4px 0; display: grid; place-items: center; }
.combo-btn::after { content: ""; border: 7px solid transparent; border-top: 9px solid #1a1a1a; border-bottom: 0; }
.atlas-page { width: 202px; height: 58px; margin: 0 2px; }
.atlas-page input { color: #6c6c6c; }

.workspace { display: flex; flex: 1; min-height: 0; }
.rail { position: relative; display: flex; flex-direction: column; align-items: center; width: 76px; padding-top: 18px; border-right: 2px solid #2a2a2a; flex: none; }
.rail-grip { width: 34px; height: 3px; margin-bottom: 5px; background: repeating-linear-gradient(90deg, #777 0 4px, transparent 4px 6px); }
.rail .tool { width: 60px; }
.rail .has-menu::after { right: 0; bottom: 8px; }
.tool.active { background: #2d2d2d; border: 2px solid #505050; border-radius: 6px; height: 58px; margin: 3px 0; }
.rail-outline { position: absolute; left: 3px; top: 9px; width: 80px; height: 1320px; border: 10px solid var(--red); z-index: 2; pointer-events: none; }

.view { flex: 1; min-width: 0; display: grid; grid-template: 31px 1fr / 32px 1fr; }
.ruler-x, .ruler-y { width: 100%; height: 100%; overflow: hidden; font-size: 16px; }
.ruler-x line, .ruler-y line { stroke: #c0c0c0; stroke-width: 2; }
.ruler-x text, .ruler-y text { fill: #bdbdbd; }
.ruler-x .cursor, .ruler-y .cursor { stroke: #c0392f; }
.canvas { position: relative; background: #d7d7d7; overflow: hidden; }
.sheet { position: absolute; left: 478px; top: 48px; width: 996px; height: 1538px; background: #fff; box-shadow: 17px 17px 0 #969696; color: #000; }
.sheet-label { position: absolute; left: 56px; font-size: 38px; line-height: 48px; font-weight: 600; }
.l1 { top: 27px; }
.l2 { top: 89px; }
.map { position: absolute; left: 34px; top: 265px; width: 927px; height: 1182px; outline: 1px dashed #334; }
.map > svg { display: block; width: 100%; height: 100%; }
.handle { position: absolute; width: 20px; height: 20px; background: #fff; border: 1px solid #3f86b5; }
.tl, .tc, .tr { top: 0; }
.ml, .mr { top: calc(50% - 10px); }
.bl, .bc, .br { bottom: 0; }
.tl, .ml, .bl { left: 0; }
.tc, .bc { left: calc(50% - 10px); }
.tr, .mr, .br { right: 0; }

.note { position: absolute; left: 16px; font-family: "Open Sans", Lato, sans-serif; font-weight: 700; font-size: 43px; line-height: 44px; color: var(--red); white-space: nowrap; }
.n1 { top: 43px; }
.n2 { top: 130px; }
.n3 { top: 197px; }
.n4 { top: 320px; }
.n5 { top: 582px; }
.n6 { top: 654px; }
.n7 { top: 725px; }
.big { top: 1230px; font-size: 64px; line-height: 66px; }

.dock { width: 922px; flex: none; display: flex; flex-direction: column; padding: 3px 0 0 12px; min-height: 0; }
.items-panel { display: flex; flex-direction: column; flex: 797 1 0; min-height: 0; }
.props-panel { display: flex; flex-direction: column; flex: 854 1 0; min-height: 0; }
.tabs { display: flex; align-items: flex-end; gap: 3px; height: 62px; border-bottom: 2px solid #292929; padding-left: 2px; flex: none; }
.tab { height: 56px; padding: 0 21px; background: #2d2d2d; border: 2px solid #454545; border-bottom: 0; border-radius: 6px 6px 0 0; line-height: 54px; }
.tab.selected { height: 62px; margin-bottom: -2px; background: var(--bg); line-height: 57px; }
.panel-head { display: flex; align-items: center; gap: 6px; height: 49px; padding: 2px 0 0 7px; flex: none; }
.panel-head.tall { height: 60px; padding-bottom: 9px; }
.panel-head h2 { flex: 1; }
.mini { width: 22px; height: 22px; }
.mini svg { display: block; width: 22px; height: 22px; }
.tree { flex: 1; background: var(--dark); border: 2px solid var(--edge); border-right: 0; min-height: 0; overflow: hidden; }
table { width: 100%; border-collapse: collapse; table-layout: fixed; }
thead tr { height: 49px; background: linear-gradient(#414141, #383838); border-bottom: 3px solid #2a2a2a; }
th, td { padding: 0; text-align: left; font-weight: 400; }
th { border-right: 2px solid #555; }
th.c-name { border-right: 0; color: #000; padding-left: 6px; }
tbody tr { height: 48px; }
.c-check { width: 70px; padding-left: 6px; }
.c-lock { width: 72px; padding-left: 7px; }
td.c-check, td.c-lock { line-height: 0; }
td:last-child { padding-left: 9px; }
.hicon { display: block; width: 30px; height: 32px; }
.eye-gray { --iris: #8c8c8c; }
.eye-blue { --iris: #6f95c4; }
input[type=checkbox] { appearance: none; width: 27px; height: 27px; background: var(--dark); border: 2px solid #262626; display: inline-grid; place-items: center; flex: none; }
input[type=checkbox]:checked::after { content: ""; width: 8px; height: 15px; border: solid #d6d6d6; border-width: 0 3px 3px 0; transform: rotate(38deg); }
.item { display: flex; align-items: center; gap: 15px; }
.item svg { width: 28px; height: 26px; }
.item.current { font-weight: 700; }

.splitter { display: grid; place-items: center; height: 15px; flex: none; }
.dots { width: 36px; height: 4px; background: repeating-linear-gradient(90deg, #777 0 4px, transparent 4px 6px); }
.item-title { height: 52px; line-height: 54px; padding-left: 15px; background: #c8c8c8; color: #fff; font-weight: 700; flex: none; }
.map-tools { display: flex; align-items: center; height: 62px; padding: 0 0 2px 6px; flex: none; }
.small { width: 51px; height: 40px; display: grid; place-items: center; }
.small svg { width: 32px; height: 32px; }
.small + .sep { margin: 0 5px; }
.small.has-menu::after { right: 6px; bottom: 2px; border-width: 7px 6px 0; }
.tiny { font-size: 8px; font-family: "Liberation Sans", sans-serif; fill: #222; }

.scroll { display: flex; flex: 1; min-height: 0; border-top: 2px solid var(--edge); border-left: 1px solid var(--edge); overflow: hidden; }
.props { flex: 1; padding: 8px 23px 0 26px; min-width: 0; }
h4 { display: flex; align-items: center; gap: 19px; height: 64px; padding: 12px 0 0 3px; font-weight: 600; }
.fold { width: 20px; height: 14px; background: #0d0d0d; clip-path: polygon(0 0, 100% 0, 50% 100%, 0 0, 4px 2px, 50% 80%, 84% 2px, 4px 2px); }
fieldset { margin: 0; padding: 26px 27px 24px 24px; border: 2px solid #3d3d3d; border-radius: 4px; display: flex; flex-direction: column; gap: 15px; min-width: 0; }
.row { display: flex; align-items: center; height: 57px; }
.row.short { height: 52px; }
.name { width: 215px; flex: none; white-space: nowrap; }
.field { flex: 1; min-width: 0; width: 100%; height: 57px; background: var(--dark); border: 2px solid #2a2a2a; border-radius: 5px; padding: 0 5px; }
.spin { flex: 1; display: flex; position: relative; min-width: 0; }
.spin .field { padding-left: 9px; }
.steps { position: absolute; right: 1px; top: 2px; bottom: 2px; width: 28px; display: flex; flex-direction: column; background: #414141; border: 1px solid #5a5a5a; border-radius: 0 4px 4px 0; }
.steps button, .sb { flex: 1; display: grid; place-items: center; }
.up::after, .down::after { content: ""; border: 7px solid transparent; }
.up::after { border-bottom: 9px solid #bdbdbd; border-top: 0; }
.down::after { border-top: 9px solid #bdbdbd; border-bottom: 0; }
.pick { flex: 1; position: relative; min-width: 0; }
.pick::after { content: ""; position: absolute; right: 13px; top: 24px; border: 7px solid transparent; border-top: 8px solid #1a1a1a; border-bottom: 0; pointer-events: none; }
select { appearance: none; display: block; width: 100%; height: 57px; color: #000; background: linear-gradient(#484848, #3e3e3e); border: 2px solid #565656; border-radius: 5px; padding: 0 8px; outline: 1px solid var(--edge); }
.sq { width: 46px; height: 44px; margin-left: 14px; display: grid; place-items: center; background: #414141; border: 2px solid #565656; border-radius: 4px; }
.sq svg { width: 30px; height: 30px; }
.sq.has-menu::after { right: 1px; bottom: 4px; }
.define { position: relative; width: 52px; height: 34px; margin-left: 19px; flex: none; }
.define svg { display: block; width: 36px; height: 34px; }
.define::after { content: ""; position: absolute; right: 0; bottom: 3px; border: 5px solid transparent; border-top: 5px solid #c4c4c4; border-bottom: 0; }
.tick { display: flex; align-items: center; gap: 11px; white-space: nowrap; }
.tick.theme { width: 360px; }
.tick.grow { flex: 1; }
.scrollbar { width: 27px; display: flex; flex-direction: column; background: #2c2c2c; flex: none; }
.sb { flex: none; height: 26px; background: #3a3a3a; border: 2px solid #4c4c4c; }
.thumb { height: 138px; margin: 2px 0 auto; background: #444; border: 2px solid #575757; }

.status { display: flex; align-items: center; height: 70px; padding: 6px 2px 0 0; flex: none; }
.coords { margin-left: auto; width: 720px; white-space: pre; }
.combo.zoom { width: 318px; height: 58px; }
.slider { appearance: none; width: 196px; height: 26px; margin: 0 22px 0 16px; background: linear-gradient(90deg, #5b9ae6 8px, transparent 8px) no-repeat 0 50% / 100% 8px, linear-gradient(#262626, #303030) no-repeat 0 50% / 100% 12px; }
.slider::-webkit-slider-thumb { appearance: none; width: 24px; height: 26px; background: #484848; border: 2px solid #5e5e5e; border-radius: 5px; }
.resize { width: 24px; height: 24px; align-self: flex-end; }
```
FILE: script.js
```js
const NS = "http://www.w3.org/2000/svg";
function add(parent, name, attrs, text) {
  const el = document.createElementNS(NS, name);
  for (const key in attrs) el.setAttribute(key, attrs[key]);
  if (text !== undefined) el.textContent = text;
  parent.appendChild(el);
  return el;
}

// Rulers: millimetres to pixels at the current zoom level.
const MM = 3.554;
function drawRulers() {
  const rx = document.getElementById("ruler-x");
  const ry = document.getElementById("ruler-y");
  for (let v = -130; v <= 500; v += 5) {
    const x = Math.round(478 + v * MM);
    const top = v % 50 === 0 ? 1 : v % 25 === 0 ? 20 : 24;
    add(rx, "line", { x1: x, x2: x, y1: top, y2: 31 });
    if (v % 50 === 0) add(rx, "text", { x: x + 4, y: 17 }, v);
  }
  for (let v = -10; v <= 445; v += 5) {
    const y = Math.round(48 + v * MM);
    const left = v % 50 === 0 ? 2 : v % 25 === 0 ? 21 : 25;
    add(ry, "line", { x1: left, x2: 32, y1: y, y2: y });
    if (v % 50 === 0) add(ry, "text", { transform: `translate(18 ${y + 8}) rotate(-90)`, "text-anchor": "end" }, v);
  }
  add(rx, "line", { class: "cursor", x1: 142, x2: 142, y1: 1, y2: 31 });
  add(ry, "line", { class: "cursor", x1: 2, x2: 32, y1: 418, y2: 418 });
}

// Street grid: per district, parallel lines in two directions,
// with rows of buildings (a dark face and a lit face) between them.
let seed = 11;
function rand() { seed = (seed * 16807) % 2147483647; return seed / 2147483647; }
const districts = [
  { area: "420,0 927,0 927,600 690,520 607,426 677,363 600,252 650,206 585,64 480,165 405,89", dirs: [[45, 46], [-47, 24]] },
  { area: "215,0 330,0 403,89 334,136 339,208 351,257 282,322 234,448 224,476 0,470 0,230 150,215 240,150", dirs: [[42, 46], [-41, 34]] },
  { area: "0,470 224,476 340,533 258,619 289,734 353,769 338,794 310,993 467,1017 454,1094 600,1182 0,1182", dirs: [[25, 34], [105, 50]] },
  { area: "693,523 927,600 927,1182 600,1182 511,1120 521,979 703,1009 649,877 622,788 554,755", dirs: [[33, 40], [108, 48]] },
  { area: "480,165 585,64 650,206 600,252 637,320 607,426 480,440 400,300 420,160", dirs: [[46, 60], [-46, 40]] },
  { area: "334,136 405,89 480,165 430,240 342,190", dirs: [[42, 50], [-44, 40]] },
  { area: "351,257 400,275 350,500 224,476 282,322", dirs: [[16, 42], [104, 46]] }
];
function drawStreets() {
  const host = document.getElementById("streets");
  const blocks = document.getElementById("blocks");
  const defs = document.querySelector("#map defs");
  districts.forEach((d, i) => {
    add(add(defs, "clipPath", { id: "district" + i }), "polygon", { points: d.area });
    const clip = { "clip-path": `url(#district${i})` };
    const g = add(host, "g", clip);
    const b = add(blocks, "g", clip);
    d.dirs.forEach(([angle, gap], n) => {
      const a = angle * Math.PI / 180, c = Math.cos(a), s = Math.sin(a);
      const line = (o, bend) => {
        const px = 463 - s * o, py = 591 + c * o;
        return `M${px - c * 900} ${py - s * 900}Q${px - s * bend} ${py + c * bend} ${px + c * 900} ${py + s * 900}`;
      };
      for (let o = -900; o < 900; o += gap * (0.75 + rand() * 0.5)) {
        const bend = (rand() - 0.5) * 30;
        add(g, "path", { d: line(o, bend), "stroke-width": rand() > 0.6 ? 2 : 1 });
      }
      if (n) for (let o = -900; o < 900; o += 12) {
        const dash = `${4 + rand() * 8} ${4 + rand() * 6} ${3 + rand() * 14} ${5 + rand() * 9}`;
        add(b, "path", { d: line(o + 2, 0), stroke: "#5a5656", "stroke-opacity": 0.1 + rand() * 0.2, "stroke-width": 4, "stroke-dasharray": dash });
        add(b, "path", { d: line(o - 2, 0), stroke: "#f2ecea", "stroke-opacity": 0.35, "stroke-width": 2, "stroke-dasharray": dash });
      }
    });
  });
}

const stops = [[542,157],[540,203],[789,141],[482,238],[590,255],[403,259],[422,266],[467,272],[429,311],[766,315],[354,394],[393,416],[552,423],[818,476],[362,538],[147,1046]];
const people = [[475,27],[629,15],[604,40],[403,59],[407,63],[530,79],[545,86],[525,114],[456,123],[500,135],[487,145],[762,191],[242,199],[224,207],[714,242],[752,292],[195,290],[174,297],[149,287],[217,316],[403,255],[590,253],[515,354],[494,416],[35,404],[105,448],[528,467],[544,466],[800,459],[786,501],[802,504],[825,503],[807,537],[812,540],[819,524],[197,1028],[174,1056],[919,798],[315,826],[309,838]];
function drawPins() {
  const host = document.getElementById("pins");
  people.forEach(([x, y]) => add(host, "use", { href: "#people", x: x - 5, y: y - 7, width: 11, height: 13 }));
  stops.forEach(([x, y]) => add(host, "use", { href: "#yellow-pin", x: x - 7, y: y - 7, width: 14, height: 14 }));
}

drawRulers();
drawStreets();
drawPins();
```
